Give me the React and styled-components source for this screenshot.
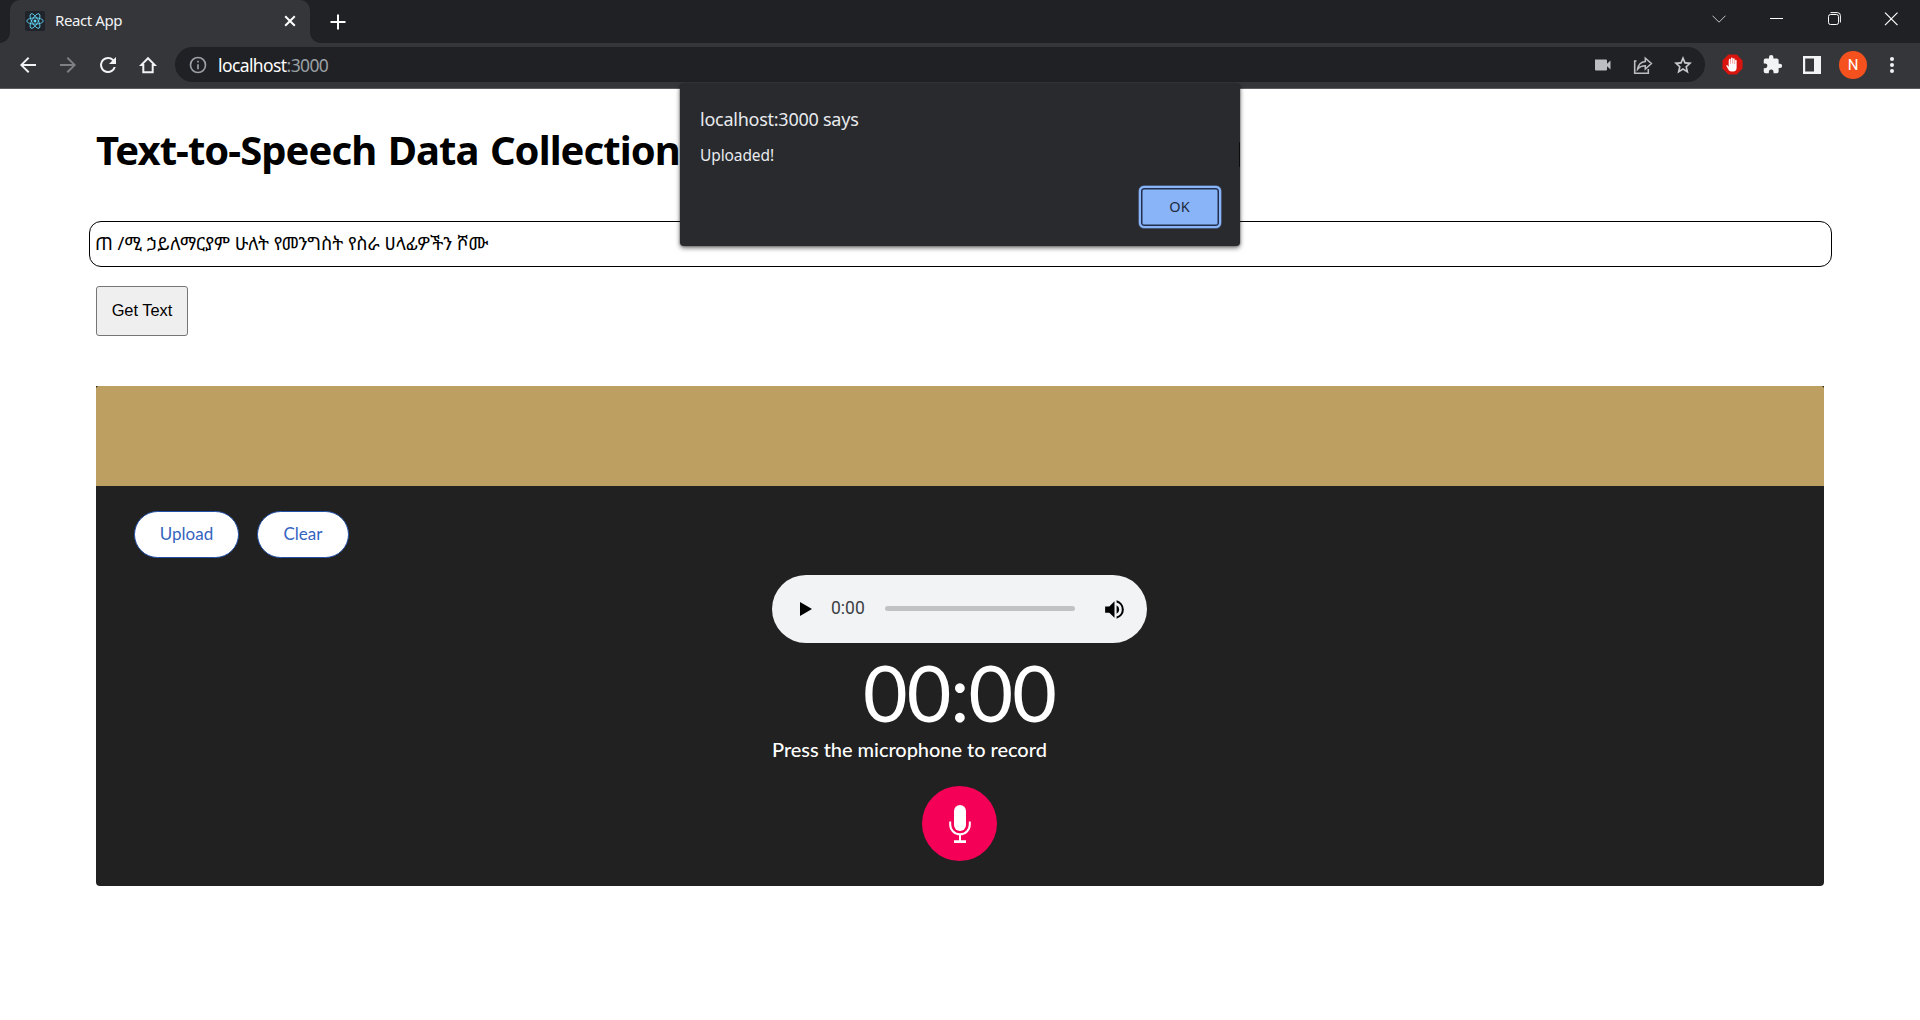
import React from "react";
import styled, { createGlobalStyle } from "styled-components";

const ui = `"Noto Sans", "Open Sans", sans-serif`;

const GlobalStyle = createGlobalStyle`
  * { box-sizing: border-box; }
  html, body { margin: 0; padding: 0; background: #fff; }
  body { width: 1920px; height: 1020px; overflow: hidden; font-family: Lato, sans-serif; }
  button { margin: 0; }
  svg { display: block; flex-shrink: 0; }
`;

const Window = styled.div`
  position: relative;
  display: flex;
  flex-direction: column;
  width: 1920px;
  height: 1020px;
`;

const TabStrip = styled.div`
  display: flex;
  height: 43px;
  padding-left: 10px;
  background: #202124;
`;

const Tab = styled.div`
  position: relative;
  display: flex;
  align-items: center;
  width: 300px;
  padding: 0 13px 1px 15px;
  border-radius: 10px 10px 0 0;
  background: #35363a;
  &::before, &::after {
    content: "";
    position: absolute;
    bottom: 0;
    width: 10px;
    height: 10px;
  }
  &::before {
    left: -10px;
    background: radial-gradient(circle at 0 0, #202124 9.5px, #35363a 10px);
  }
  &::after {
    right: -10px;
    background: radial-gradient(circle at 100% 0, #202124 9.5px, #35363a 10px);
  }
`;

const Favicon = styled.span`
  display: grid;
  place-items: center;
  width: 20px;
  height: 20px;
  border-radius: 2px;
  background: #20232a;
`;

const TabTitle = styled.span`
  flex: 1;
  margin: 0 0 2px 10px;
  font: 15px/20px ${ui};
  letter-spacing: -0.4px;
  color: #f1f3f4;
  white-space: nowrap;
`;

const NewTab = styled.div`
  display: grid;
  place-items: center;
  width: 55px;
`;

const WindowControls = styled.div`
  display: flex;
  align-items: center;
  gap: 37.5px;
  height: 37px;
  margin-left: auto;
  padding-right: 22px;
`;

const Toolbar = styled.div`
  display: flex;
  align-items: center;
  height: 46px;
  padding: 0 16px 2px 16px;
  border-bottom: 1px solid #5b5c5f;
  background: #35363a;
`;

const NavGroup = styled.div`
  display: flex;
  align-items: center;
  gap: 16px;
`;

const Omnibox = styled.div`
  display: flex;
  align-items: center;
  flex: 1;
  height: 35px;
  margin-left: 15px;
  padding: 0 10px 0 13px;
  border-radius: 18px;
  background: #202124;
`;

const Address = styled.div`
  flex: 1;
  margin-left: 10px;
  font: 17.5px/24px ${ui};
  letter-spacing: -0.6px;
  color: #fff;
  span { color: #9aa0a6; }
`;

const OmniActions = styled.div`
  display: flex;
  gap: 16px;
`;

const Extensions = styled.div`
  display: flex;
  align-items: center;
  gap: 16px;
  margin-left: 15px;
`;

const ExtensionSlot = styled.div`
  display: grid;
  place-items: center;
  width: 24px;
  height: 24px;
`;

const Avatar = styled.div`
  display: grid;
  place-items: center;
  width: 28px;
  height: 28px;
  margin: 0 -3px 0 -1px;
  border-radius: 50%;
  background: #f4511e;
  color: #fff;
  font: 15px/28px Roboto, sans-serif;
`;

const Page = styled.main`
  display: flex;
  flex-direction: column;
  padding: 0 96px;
`;

const Title = styled.h1`
  margin: 33px 0 44px;
  font: 700 40px/55px ${ui};
  letter-spacing: -0.95px;
  word-spacing: 2px;
  color: #000;
  white-space: nowrap;
`;

const TextField = styled.div`
  display: flex;
  align-items: center;
  height: 46px;
  margin: 0 -8px 0 -7px;
  padding: 0 5px 2px;
  border: 1px solid #000;
  border-radius: 12px;
  font: 18.3px/24px "Noto Sans Ethiopic", "Noto Serif Ethiopic", Abyssinica, "Noto Sans", sans-serif;
  color: #000;
`;

const GetText = styled.button`
  align-self: flex-start;
  width: 92px;
  height: 50px;
  margin-top: 19px;
  padding: 0 0 2px;
  border: 1px solid #767676;
  border-radius: 3px;
  background: #efefef;
  font: 16.4px "Liberation Sans", Arial, sans-serif;
  color: #000;
`;

const Recorder = styled.section`
  display: flex;
  flex-direction: column;
  height: 500px;
  margin-top: 50px;
  border-radius: 0 0 4px 4px;
  background: #212121;
`;

const Banner = styled.div`
  height: 100px;
  border-radius: 3px 3px 0 0;
  background: #bd9f61;
`;

const Actions = styled.div`
  display: flex;
  gap: 18px;
  padding: 25px 38px 0;
`;

const Pill = styled.button`
  width: ${(p) => p.$width}px;
  height: 47px;
  padding: 0 0 2px;
  border: 1px solid #2250a8;
  border-radius: 24px;
  background: #fff;
  font: 17px Lato, sans-serif;
  color: #3563c0;
`;

const Console = styled.div`
  display: flex;
  flex-direction: column;
  align-items: center;
  align-self: center;
  width: 375px;
  margin: 17px 1px 0 0;
`;

const Player = styled.div`
  display: flex;
  align-items: center;
  width: 375px;
  height: 68px;
  padding: 0 20px 0 28px;
  border-radius: 34px;
  background: #f1f3f4;
`;

const PlayTime = styled.span`
  width: 34px;
  margin: -2px 20px 0 19px;
  font: 17.5px/22px Roboto, sans-serif;
  color: #3c4043;
`;

const Track = styled.div`
  flex-shrink: 0;
  width: 190px;
  height: 5px;
  margin: -1px 27px 0 0;
  border-radius: 3px;
  background: #c1c2c4;
`;

const Clock = styled.div`
  margin-top: 3px;
  font: 400 77px/92px Lato, sans-serif;
  letter-spacing: -1px;
  color: #fff;
`;

const Hint = styled.p`
  align-self: flex-start;
  margin: -4px 0 0;
  font: 500 20px/30px Lato, sans-serif;
  letter-spacing: -0.04px;
  color: #fff;
  white-space: nowrap;
`;

const MicButton = styled.button`
  display: grid;
  place-items: center;
  width: 75px;
  height: 75px;
  margin-top: 22px;
  padding: 0;
  border: 0;
  border-radius: 50%;
  background: #f50057;
`;

const Dialog = styled.div`
  position: absolute;
  left: 680px;
  top: 84px;
  display: flex;
  flex-direction: column;
  width: 560px;
  height: 162px;
  padding: 21px 19px 18px 20px;
  border-radius: 4px;
  background: #292a2d;
  box-shadow: 0 2px 5px rgba(0, 0, 0, 0.55), 0 0 2px rgba(0, 0, 0, 0.5);
  font-family: ${ui};
  color: #e8eaed;
  &::after {
    content: "";
    position: absolute;
    top: 58px;
    right: 0;
    width: 1px;
    height: 25px;
    background: #0c0c0d;
  }
`;

const DialogTitle = styled.div`
  font-size: 18px;
  line-height: 28px;
  letter-spacing: -0.25px;
`;

const DialogText = styled.div`
  margin-top: 10px;
  font-size: 15.5px;
  line-height: 24px;
  letter-spacing: -0.1px;
`;

const OkButton = styled.button`
  align-self: flex-end;
  width: 82px;
  height: 42px;
  margin-top: auto;
  padding: 0 1px 2px 0;
  border: 2px solid #8ab4f8;
  border-radius: 5px;
  background: #8ab4f8;
  box-shadow: inset 0 0 0 1.5px #202f4d, 0 0 0 0.5px #6486bb;
  font: 14.5px ${ui};
  color: #202b3d;
`;

const ReactLogo = () => (
  <svg width="18" height="18" viewBox="-12 -12 24 24" fill="none" stroke="#61dafb" strokeWidth="1.1">
    <circle r="2" fill="#61dafb" stroke="none" />
    <ellipse rx="11" ry="4.2" />
    <ellipse rx="11" ry="4.2" transform="rotate(60)" />
    <ellipse rx="11" ry="4.2" transform="rotate(120)" />
  </svg>
);

const Glyph = ({ d, size = 24, color = "#f1f3f4", children }) => (
  <svg width={size} height={size} viewBox="0 0 24 24" fill={color}>
    {d && <path d={d} />}
    {children}
  </svg>
);

const Line = ({ d, w, h, width = 1, color = "#fff" }) => (
  <svg width={w} height={h} fill="none" stroke={color} strokeWidth={width}>
    <path d={d} />
  </svg>
);

export default function App() {
  return (
    <>
      <GlobalStyle />
      <Window>
        <TabStrip>
          <Tab>
            <Favicon><ReactLogo /></Favicon>
            <TabTitle>React App</TabTitle>
            <Line w={14} h={14} width={2} d="M2.2 2.2 11.8 11.8M11.8 2.2 2.2 11.8" />
          </Tab>
          <NewTab><Line w={16} h={16} width={2} d="M8 0.5V15.5M0.5 8H15.5" /></NewTab>
          <WindowControls>
            <Line w={14} h={8} d="M0.5 0.7 7 7.2 13.5 0.7" color="#c5c6c8" />
            <Line w={20} h={2} d="M7 0.5H20" />
            <svg width="20" height="14" fill="none" stroke="#fff">
              <rect x="7.5" y="2.5" width="10" height="10" rx="2" />
              <path d="M9.5 0.6H16.5Q19.4 0.8 19.4 3.5V10.5" />
            </svg>
            <Line w={20} h={14} width={1.2} d="M7 0.7 19.5 13.2M19.5 0.7 7 13.2" />
          </WindowControls>
        </TabStrip>
        <Toolbar>
          <NavGroup>
            <Glyph d="M20 11.1H7.6l5.7-5.7L12 4 4 12l8 8 1.4-1.4-5.8-5.7H20z" />
            <Glyph color="#7f8083" d="M4 11.1h12.4l-5.7-5.7L12 4l8 8-8 8-1.4-1.4 5.8-5.7H4z" />
            <Glyph d="M17.65 6.35A7.95 7.95 0 0 0 12 4a8 8 0 1 0 7.73 10h-2.08A6 6 0 1 1 12 6c1.66 0 3.14.69 4.22 1.78L13 11h7V4z" />
            <Glyph>
              <path d="M12 5.2 5.4 11.9H7.300V19.300H16.700V11.900H18.600Z" fill="none" stroke="#f1f3f4" strokeWidth="2" />
            </Glyph>
          </NavGroup>
          <Omnibox>
            <Glyph size={20} color="#9aa0a6" d="M11 7h2v2h-2zm0 4h2v6h-2zm1-9a10 10 0 1 0 0 20 10 10 0 0 0 0-20zm0 18a8 8 0 1 1 0-16 8 8 0 0 1 0 16z" />
            <Address>localhost<span>:3000</span></Address>
            <OmniActions>
              <Glyph color="#bdbec2" d="M4 6.5h11a1 1 0 0 1 1 1v3.2l3.5-3.2v9L16 13.3v3.2a1 1 0 0 1-1 1H5a1 1 0 0 1-1-1z" />
              <Glyph color="#bdbec2">
                <path d="M5.5 8H3.7V20.2H17.3V16" fill="none" stroke="#bdbec2" strokeWidth="1.6" />
                <path d="M14.3 5.2V8.5C9.7 9 7.2 12 6.6 16.2 8.6 13.7 11 12.8 14.3 12.8V16L20.4 10.5Z" fill="none" stroke="#bdbec2" strokeWidth="1.5" />
              </Glyph>
              <Glyph color="#c7c8cc" d="M21 9.6l-6.5-.6L12 3 9.500 9 3 9.600l4.900 4.300L6.400 20.500 12 17l5.600 3.500-1.500-6.600zM12 15.100l-3.100 1.900.8-3.600-2.700-2.400 3.600-.3L12 7.300l1.400 3.400 3.600.3-2.700 2.400.8 3.600z" />
            </OmniActions>
          </Omnibox>
          <Extensions>
            <ExtensionSlot>
              <Glyph size={23}>
                <path d="M7.7 1.500H16.300L22.500 7.700V16.300L16.300 22.500H7.700L1.500 16.300V7.700Z" fill="#d9150f" />
                <path d="M8 8.500v5.700l-.2.1-1.400-1.700-1.100.5 2.800 4.800q1 1.500 3.500 1.500h1q3.700 0 3.700-3.900V7.900a.8.800 0 0 0-1.600 0v3.600h-.4V6.200a.85.85 0 0 0-1.700 0v5h-.4V5.500a.9.900 0 0 0-1.800 0v5.700H10V6.900a.85.85 0 0 0-1.700 0z" fill="#fff" />
              </Glyph>
            </ExtensionSlot>
            <ExtensionSlot>
              <Glyph size={21} d="M20.5 11H19V7a2 2 0 0 0-2-2h-4V3.500a2.500 2.500 0 0 0-5 0V5H4a2 2 0 0 0-2 2v3.800h1.500a2.700 2.700 0 0 1 0 5.400H2V20a2 2 0 0 0 2 2h3.800v-1.500a2.700 2.700 0 0 1 5.400 0V22H17a2 2 0 0 0 2-2v-4h1.500a2.500 2.500 0 0 0 0-5z" />
            </ExtensionSlot>
            <ExtensionSlot>
              <Glyph>
                <path fillRule="evenodd" d="M3 3H21V21H3ZM5.200 5.500V18.500H14V5.500Z" />
              </Glyph>
            </ExtensionSlot>
            <Avatar>N</Avatar>
            <ExtensionSlot>
              <Glyph>
                <circle cx="12" cy="6" r="2" /><circle cx="12" cy="12" r="2" /><circle cx="12" cy="18" r="2" />
              </Glyph>
            </ExtensionSlot>
          </Extensions>
        </Toolbar>
        <Page>
          <Title>Text-to-Speech Data Collection</Title>
          <TextField>ጠ /ሚ ኃይለማርያም ሁለት የመንግስት የስራ ሀላፊዎችን ሾሙ</TextField>
          <GetText>Get Text</GetText>
          <Recorder>
            <Banner />
            <Actions>
              <Pill $width={105}>Upload</Pill>
              <Pill $width={92}>Clear</Pill>
            </Actions>
            <Console>
              <Player>
                <svg width="12" height="14"><path d="M0 0V14L12 7Z" /></svg>
                <PlayTime>0:00</PlayTime>
                <Track />
                <Glyph color="#000" d="M3 9v6h4l5 5V4L7 9H3zm13.500 3A4.500 4.500 0 0 0 14 7.970v8.050A4.470 4.470 0 0 0 16.500 12zM14 3.230v2.060a7 7 0 0 1 0 13.420v2.060a9 9 0 0 0 0-17.540z" size={25} />
              </Player>
              <Clock>00:00</Clock>
              <Hint>Press the microphone to record</Hint>
              <MicButton>
                <svg width="22" height="38" fill="#fff">
                  <rect x="5" y="0" width="12" height="26" rx="6" />
                  <path d="M1.200 16.500V19.500a9.800 9.800 0 0 0 19.600 0V16.500" fill="none" stroke="#fff" strokeWidth="2" />
                  <path d="M10 29H12V35.200H17V38H5V35.200H10Z" />
                </svg>
              </MicButton>
            </Console>
          </Recorder>
        </Page>
        <Dialog>
          <DialogTitle>localhost:3000 says</DialogTitle>
          <DialogText>Uploaded!</DialogText>
          <OkButton>OK</OkButton>
        </Dialog>
      </Window>
    </>
  );
}
